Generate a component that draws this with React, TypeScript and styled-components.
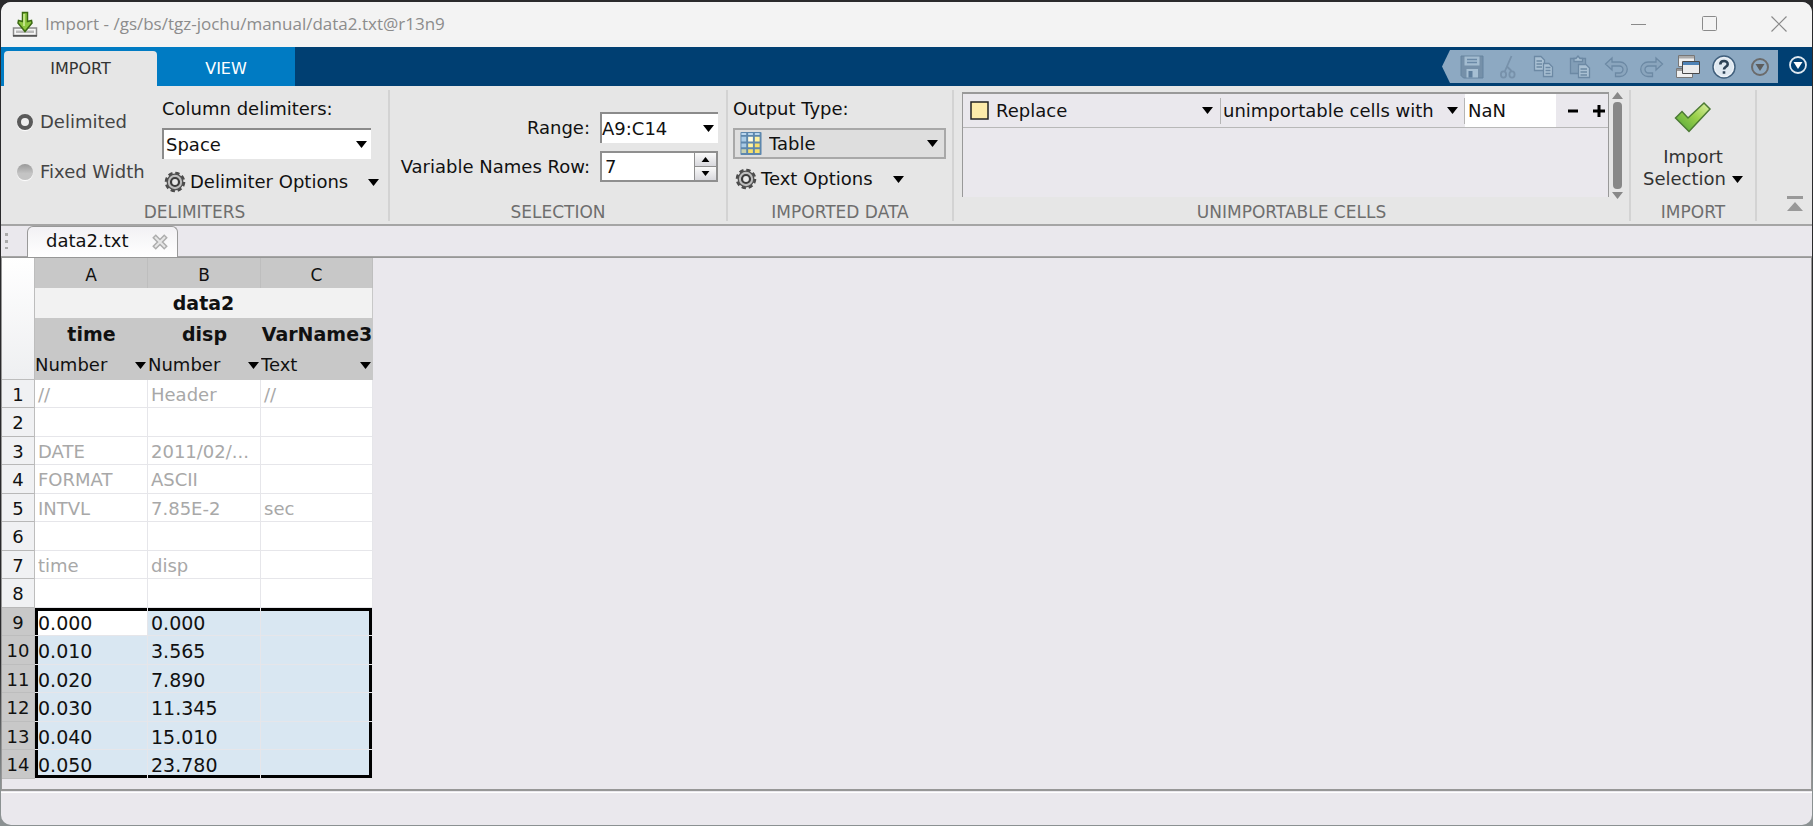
import React from "react";
import styled, { createGlobalStyle, css } from "styled-components";

const ui = `"DejaVu Sans", Verdana, sans-serif`;

const GlobalStyle = createGlobalStyle`
  *, *::before, *::after { box-sizing: border-box; }
  body { margin: 0; background: linear-gradient(#2a2a2c 0 80%, #8b9192 95%); font: 18px/22px ${ui}; color: #111; }
  button, input, select { font: inherit; color: inherit; margin: 0; padding: 0; border: 0; background: none; outline: 0; border-radius: 0; }
  svg { flex-shrink: 0; }
  #root { display: flex; flex-direction: column; min-height: 100vh; }
`;

const Window = styled.main`
  flex: 1;
  display: flex;
  flex-direction: column;
  margin: 2px 1px 1px;
  border-radius: 10px;
  overflow: hidden;
  background: #eae8ed;
`;

const TitleBar = styled.header`
  display: flex;
  align-items: center;
  height: 45px;
  padding: 0 0 2px 11px;
  background: #f3f3f3;
`;
const Title = styled.h1`
  flex: 1;
  margin: 0 0 0 7px;
  font: 400 17px/24px "Open Sans", "Noto Sans", sans-serif;
  color: #8c8c8c;
`;
const WindowButton = styled.button`
  display: grid;
  place-items: center;
  width: 71px;
  height: 43px;
  color: #8a8a8a;
  &:last-child { width: 67px; }
`;

const TabBar = styled.nav`
  display: flex;
  align-items: flex-end;
  height: 39px;
  background: #003f72;
`;
const Tabs = styled.div`
  display: flex;
  align-items: flex-end;
  height: 39px;
  padding-left: 3px;
  background: #007bc3;
`;
const Tab = styled.button<{ $active?: boolean }>`
  width: ${(p) => (p.$active ? 153 : 138)}px;
  height: 35px;
  font-size: 16px;
  color: ${(p) => (p.$active ? "#333" : "#fff")};
  background: ${(p) => (p.$active ? "#e6e6e6" : "transparent")};
  border-radius: 4px 4px 0 0;
`;
const QuickBar = styled.div`
  display: flex;
  height: 33px;
  margin: 3px 0 3px auto;
  padding-left: 12px;
  background: #8da9c2;
  clip-path: polygon(8px 0, 100% 0, 100% 100%, 8px 100%, 0 50%);
`;
const QuickButton = styled.button`
  display: grid;
  place-items: center;
  width: 36px;
  height: 33px;
`;
const MenuButton = styled(QuickButton)`
  width: 34px;
  height: 39px;
  padding: 0 0 4px 6px;
`;

const Ribbon = styled.section`
  display: flex;
  height: 140px;
  padding: 4px 0 3px;
  background: #e6e6e6;
  border-bottom: 2px solid #a5a5a5;
`;
const Section = styled.section<{ $width?: number }>`
  display: flex;
  flex-direction: column;
  ${(p) => (p.$width ? css`width: ${p.$width}px;` : css`flex: 1;`)}
  min-width: 0;
  border-right: 2px solid #d3d3d3;
`;
const SectionBody = styled.div<{ $gap?: number; $pad?: string }>`
  flex: 1;
  min-height: 0;
  display: flex;
  gap: ${(p) => p.$gap ?? 0}px;
  padding: ${(p) => p.$pad ?? "0"};
`;
const Caption = styled.h2`
  margin: 0;
  font-size: 17px;
  line-height: 18px;
  font-weight: 400;
  text-align: center;
  color: #6e6e6e;
`;
const Stack = styled.div<{ $gap: number; $width?: number; $top?: number }>`
  display: flex;
  flex-direction: column;
  gap: ${(p) => p.$gap}px;
  padding-top: ${(p) => p.$top ?? 0}px;
  ${(p) => p.$width && css`width: ${p.$width}px;`}
`;

const RadioLabel = styled.label`
  display: flex;
  align-items: center;
  gap: 7px;
  height: 22px;
  white-space: nowrap;
  color: #444;
`;
const Radio = styled.input`
  appearance: none;
  flex-shrink: 0;
  width: 16px;
  height: 16px;
  border-radius: 50%;
  background: linear-gradient(#999, #c4c4c4 60%);
  box-shadow: 0 1px 1px #fff;
  &:checked { background: #f0f0f0; border: 4px solid #5a5a5a; }
`;

const PickerWrap = styled.span<{ $look?: "sunken" | "raised" | "flat"; $h: number; $left: number; $right: number; $width?: number; $grow?: boolean }>`
  display: grid;
  align-items: center;
  height: ${(p) => p.$h}px;
  ${(p) => p.$width && css`width: ${p.$width}px;`}
  ${(p) => p.$grow && css`flex: 1;`}
  ${(p) => p.$look === "sunken" && css`background: #fff; border-top: 2px solid #8b8b8b; border-left: 2px solid #8b8b8b;`}
  ${(p) => p.$look === "raised" && css`background: #dedede; border: 2px solid #a8a8a8;`}
  & > * { grid-area: 1 / 1; }
  & > select, & > input { width: 100%; height: 100%; min-width: 0; appearance: none; padding-left: ${(p) => p.$left}px; }
  & > svg { pointer-events: none; margin-left: 5px; }
  & > svg:last-child { justify-self: end; margin: 0 ${(p) => p.$right}px 0 0; }
`;
const OptionsButton = styled.button<{ $h: number }>`
  display: flex;
  align-items: center;
  gap: 4px;
  height: ${(p) => p.$h}px;
  padding-left: 2px;
  white-space: nowrap;
  & > svg:last-child { margin-left: 16px; }
`;

const FieldGrid = styled.div`
  flex: 1;
  display: grid;
  grid-template-columns: 1fr 118px;
  grid-auto-rows: 31px;
  gap: 8px 10px;
  align-items: center;
  text-align: right;
  white-space: nowrap;
`;
const Spinner = styled.span`
  display: flex;
  height: 31px;
  border: 2px solid #8f8f8f;
  background: #fff;
  & > input { flex: 1; min-width: 0; padding-left: 3px; appearance: textfield; }
  & > input::-webkit-inner-spin-button { appearance: none; }
`;
const SpinButtons = styled.span`
  display: flex;
  flex-direction: column;
  width: 22px;
  border-left: 1px solid #8f8f8f;
`;
const SpinButton = styled.button`
  flex: 1;
  display: grid;
  place-items: center;
  background: linear-gradient(#fafafa, #d8d8dd);
  & + & { border-top: 1px solid #8f8f8f; }
`;

const RulePanel = styled.div`
  flex: 1;
  height: 105px;
  border: 1px solid #999;
  border-width: 2px 1px 0;
  background: #eae8ed;
`;
const Rule = styled.div`
  display: flex;
  align-items: center;
  height: 34px;
  border-bottom: 1px solid #b8b8b8;
`;
const Divider = styled.span`
  width: 1px;
  height: 26px;
  background: #b5b5b5;
`;
const ReplaceValue = styled.input`
  width: 91px;
  height: 33px;
  padding-left: 3px;
  background: #fff;
`;
const RuleButton = styled.button`
  display: grid;
  place-items: center;
  width: 18px;
  height: 26px;
  margin-left: 8px;
`;
const ScrollTrack = styled.div`
  display: flex;
  flex-direction: column;
  align-items: center;
  gap: 3px;
  width: 9px;
  height: 107px;
`;
const ScrollThumb = styled.div`
  flex: 1;
  width: 9px;
  border-radius: 4px;
  background: #888;
`;
const ImportButton = styled.button`
  flex: 1;
  display: flex;
  flex-direction: column;
  align-items: center;
  padding-top: 11px;
  color: #333;
  & > svg { margin-bottom: 12px; }
`;
const ButtonLine = styled.span`
  display: flex;
  align-items: center;
  gap: 6px;
`;
const RibbonEnd = styled.div`
  display: flex;
  align-items: flex-end;
  justify-content: flex-end;
  width: 55px;
  padding: 0 9px 4px 0;
`;

const DocBar = styled.div`
  display: flex;
  align-items: flex-end;
  height: 31px;
  border-bottom: 1px solid #a5a5a5;
`;
const Grip = styled.span`
  align-self: center;
  width: 3px;
  height: 16px;
  margin: 0 19px 0 4px;
  background: repeating-linear-gradient(#aaa 0 3px, transparent 3px 7px);
`;
const DocTab = styled.div`
  display: flex;
  align-items: center;
  justify-content: space-between;
  width: 151px;
  height: 31px;
  margin-bottom: -1px;
  padding: 0 8px 2px 18px;
  border: 1px solid #999;
  border-bottom: 0;
  border-radius: 6px 6px 0 0;
  background: linear-gradient(#f2f1f4, #fff);
`;
const DocClose = styled.button`
  display: grid;
  place-items: center;
  padding-top: 2px;
`;

const Sheet = styled.section`
  flex: 1;
  margin-bottom: 1px;
  border: 1px solid #979797;
  border-bottom-width: 2px;
`;
const StatusBar = styled.footer`
  height: 33px;
  border-top: 1px solid #fff;
`;

const Grid = styled.table`
  width: 371px;
  table-layout: fixed;
  border-collapse: separate;
  border-spacing: 0;
  th, td { padding: 0; overflow: hidden; white-space: nowrap; text-overflow: ellipsis; }
`;
const Corner = styled.td`
  background: linear-gradient(#fff, #eeeff1);
  border-right: 1px solid #bdbdbd;
  border-bottom: 1px solid #bdbdbd;
`;
const ColLetter = styled.th`
  && { padding-top: 3px; }
  height: 30px;
  background: #c8c8c8;
  border-right: 1px solid #bebebe;
  font-weight: 400;
  font-size: 17px;
`;
const TableName = styled.th`
  height: 30px;
  background: #f2f2f2;
  border-right: 1px solid #c8c8c8;
  font-size: 19px;
`;
const VarName = styled.th`
  height: 32px;
  background: #c8c8c8;
  font-size: 19px;
`;
const TypeCell = styled.td`
  height: 30px;
  background: #c8c8c8;
`;
const Row = styled.tr`
  height: 28px;
  &:nth-child(even) { height: 29px; }
`;
const RowNumber = styled.th<{ $on: boolean }>`
  && { padding-top: 2px; }
  background: ${(p) => (p.$on ? "#c8c8c8" : "#f0f1f3")};
  border-right: 1px solid #bdbdbd;
  border-bottom: 1px solid ${(p) => (p.$on ? "#bdbdbd" : "#b8b8b8")};
  font-weight: 400;
  text-align: center;
`;
const Cell = styled.td<{ $on: boolean; $anchor: boolean; $edge: string }>`
  && { padding: 2px 0 0 3px; }
  border-right: 1px solid #e6e6ea;
  border-bottom: 1px solid #e6e6ea;
  background: ${(p) => (p.$on && !p.$anchor ? "#d9e7f2" : "#fff")};
  color: ${(p) => (p.$on ? "#111" : "#a8a8a8")};
  font-size: ${(p) => (p.$on ? 19 : 18)}px;
  box-shadow: ${(p) => p.$edge};
`;

const Caret = ({ up, size = 11, color = "#000" }: { up?: boolean; size?: number; color?: string }) => (
  <svg width={size} height={size - 4} viewBox="0 0 11 7" aria-hidden="true">
    <path d={up ? "M0 7H11L5.500 0Z" : "M0 0H11L5.500 7Z"} fill={color} />
  </svg>
);

const Gear = () => (
  <svg width="22" height="22" viewBox="0 0 22 22" aria-hidden="true">
    <circle cx="11" cy="11" r="8.800" fill="none" stroke="#4c4c4c" strokeWidth="3" strokeDasharray="4.200 2.711" />
    <circle cx="11" cy="11" r="7.800" fill="#bdbdbd" stroke="#505050" strokeWidth="1.300" />
    <circle cx="11" cy="11" r="4" fill="#e8e8e8" stroke="#3c3c3c" strokeWidth="2.200" />
  </svg>
);

const TableIcon = () => (
  <svg width="22" height="23" viewBox="0 0 22 24" aria-hidden="true">
    <rect width="22" height="24" rx="1" fill="#5d87ad" />
    <path d="M1 1H6V3H1ZM8 1H13V3H8ZM15 1H20V3H15Z" fill="#b9d6ee" />
    <path d="M1 5H6V10H1ZM1 12H6V16H1Z" fill="#a9cbe6" />
    <path d="M1 18H6V22H1Z" fill="#c9d2b0" />
    <path d="M8 5H13V10H8Z" fill="#fffbe0" />
    <path d="M15 5H20V10H15ZM8 12H13V16H8Z" fill="#fff2a0" />
    <path d="M15 12H20V16H15ZM8 18H13V22H8ZM15 18H20V22H15Z" fill="#f6df6a" />
  </svg>
);

const AppIcon = () => (
  <svg width="26" height="26" viewBox="0 0 26 26" aria-hidden="true">
    <path d="M1.500 17H24.500V24.500H1.500Z" fill="#f6f6f6" stroke="#8a8a8a" strokeWidth="1.500" />
    <path d="M4 19.500H22V22H4Z" fill="#b9b9b9" />
    <path d="M1 24.800H25" stroke="#555" strokeWidth="1.800" />
    <path d="M10.500 1.500H15.500V10.500L19.500 9.500L20 12L13 20.500L6 12L6.500 9.500L10.500 10.500Z" fill="#8cc63f" stroke="#3b6a12" strokeWidth="1.500" />
    <path d="M12 3V15" stroke="#d4f0a0" strokeWidth="1.500" />
  </svg>
);

const CheckIcon = () => (
  <svg width="38" height="33" viewBox="0 0 38 33" aria-hidden="true">
    <defs>
      <linearGradient id="check" x1="0" y1="1" x2="1" y2="0">
        <stop offset="0" stopColor="#4da33a" />
        <stop offset=".55" stopColor="#9ad04a" />
        <stop offset="1" stopColor="#dff0a8" />
      </linearGradient>
    </defs>
    <path d="M1.500 17L8 10.500L14 17L30 2L36 8L15 30.500Z" fill="url(#check)" stroke="#4c7a34" strokeWidth="1.500" />
  </svg>
);

const quick: Record<string, React.ReactNode> = {
  Save: (
    <g>
      <path d="M1 1H23V23H3.500L1 20.500Z" fill="#7590a9" stroke="#66849f" />
      <path d="M4.500 1.500H19.500V10.500H4.500Z" fill="#a3bcd0" />
      <path d="M7 4.500H17M7 7.500H17" stroke="#6a89a6" strokeWidth="1.300" />
      <path d="M6.500 14H18V22.500H6.500Z" fill="#a6bfd3" />
      <path d="M8.500 16H12.500V22.500H8.500Z" fill="#5f7f9d" />
    </g>
  ),
  Cut: (
    <g fill="none" stroke="#7791aa" strokeWidth="1.800">
      <path d="M15.500 1L9 16M10.500 11L15.500 16" />
      <ellipse cx="7.500" cy="19.500" rx="2.600" ry="3.200" />
      <ellipse cx="16" cy="19.500" rx="2.600" ry="3.200" />
    </g>
  ),
  Copy: (
    <g fill="#a9c0d3" stroke="#6c89a4" strokeWidth="1.300">
      <path d="M2.500 1.500H9L12.500 5V15.500H2.500Z" />
      <path d="M4.500 6H10M4.500 9H10M4.500 12H10" />
      <path d="M11.500 8.500H17L20.500 12V21.500H11.500Z" />
      <path d="M13.500 12.500H18.500M13.500 15.500H18.500M13.500 18.500H18.500" />
    </g>
  ),
  Paste: (
    <g stroke="#6c89a4" strokeWidth="1.300">
      <path d="M2.500 3.500H17.500V18.500H2.500Z" fill="#829eb7" />
      <path d="M6 3.500H8L10 1L12 3.500H14.500V6.500H6Z" fill="#a9c0d3" />
      <path d="M10.500 9.500H18L21.500 13V22.500H10.500Z" fill="#a9c0d3" />
      <path d="M12.500 14H19M12.500 17H19M12.500 20H19" />
    </g>
  ),
  Undo: <path d="M8 3L1.500 9L8 15V11H15.500A3.500 3.500 0 0 1 15.500 18H11.500V21.500H16A7 7 0 0 0 16 7H8Z" fill="#8aa5bd" stroke="#6c89a4" strokeWidth="1.300" />,
  Redo: <path d="M16 3L22.500 9L16 15V11H8.500A3.500 3.500 0 0 0 8.500 18H12.500V21.500H8A7 7 0 0 1 8 7H16Z" fill="#8aa5bd" stroke="#6c89a4" strokeWidth="1.300" />,
  Windows: (
    <g stroke="#777">
      <path d="M2.500 .500H18.500V11.500H2.500Z" fill="#f0f0f0" />
      <path d="M3 1H18V3.500H3Z" fill="#aaa" stroke="none" />
      <path d="M.500 13.500H16.500V22.500H.500Z" fill="#f0f0f0" />
      <path d="M1 14H16V16H1Z" fill="#999" stroke="none" />
      <path d="M6.500 6.500H23.500V18.500H6.500Z" fill="#ececec" stroke="#4a4a4a" />
      <path d="M7 7H23V10H7Z" fill="#4f83b6" stroke="none" />
    </g>
  ),
  Help: (
    <g fill="none">
      <circle cx="12" cy="12" r="11" fill="#eef3f8" stroke="#41607d" strokeWidth="1.500" />
      <circle cx="12" cy="12" r="9" fill="#dfe8f0" />
      <path d="M8.300 9.500C8.300 4.800 15.700 4.800 15.700 9.200C15.700 11.800 12 11.800 12 14.500M12 16.300V18.800" stroke="#2d4255" strokeWidth="2.600" />
    </g>
  ),
  More: (
    <g>
      <circle cx="12" cy="12" r="8" fill="none" stroke="#6b6b6b" strokeWidth="2" />
      <path d="M7.500 9H16.500L12 16Z" fill="#5c5c5c" />
    </g>
  ),
};

const rows: [string, string, string][] = [
  ["//", "Header", "//"],
  ["", "", ""],
  ["DATE", "2011/02/...", ""],
  ["FORMAT", "ASCII", ""],
  ["INTVL", "7.85E-2", "sec"],
  ["", "", ""],
  ["time", "disp", ""],
  ["", "", ""],
  ["0.000", "0.000", ""],
  ["0.010", "3.565", ""],
  ["0.020", "7.890", ""],
  ["0.030", "11.345", ""],
  ["0.040", "15.010", ""],
  ["0.050", "23.780", ""],
];
const firstSelected = 8;

function selectionEdge(row: number, col: number) {
  if (row < firstSelected) return "none";
  const edges: string[] = [];
  if (row === firstSelected) edges.push("inset 0 3px #000");
  if (row === rows.length - 1) edges.push("inset 0 -3px #000");
  if (col === 0) edges.push("inset 3px 0 #000");
  if (col === 2) edges.push("inset -3px 0 #000");
  return edges.join(", ") || "none";
}

export default function App() {
  return (
    <>
      <GlobalStyle />
      <Window>
        <TitleBar>
          <AppIcon />
          <Title>Import - /gs/bs/tgz-jochu/manual/data2.txt@r13n9</Title>
          <WindowButton aria-label="Minimize">
            <svg width="16" height="16"><path d="M0 8.500H15" stroke="currentColor" /></svg>
          </WindowButton>
          <WindowButton aria-label="Maximize">
            <svg width="16" height="16"><rect x=".5" y=".5" width="14" height="14" rx="1" fill="none" stroke="currentColor" /></svg>
          </WindowButton>
          <WindowButton aria-label="Close">
            <svg width="16" height="16"><path d="M.500 .500L15.500 15.500M15.500 .500L.500 15.500" stroke="currentColor" strokeWidth="1.200" /></svg>
          </WindowButton>
        </TitleBar>

        <TabBar>
          <Tabs>
            <Tab $active>IMPORT</Tab>
            <Tab>VIEW</Tab>
          </Tabs>
          <QuickBar>
            {Object.entries(quick).map(([name, art]) => (
              <QuickButton key={name} aria-label={name}>
                <svg width="24" height="24" viewBox="0 0 24 24">{art}</svg>
              </QuickButton>
            ))}
          </QuickBar>
          <MenuButton aria-label="Toolstrip menu">
            <svg width="20" height="20" viewBox="0 0 20 20">
              <circle cx="10" cy="10" r="8" fill="none" stroke="#dfe8f0" strokeWidth="1.800" />
              <path d="M5.500 7H14.500L10 14Z" fill="#fff" />
            </svg>
          </MenuButton>
        </TabBar>

        <Ribbon>
          <Section $width={389}>
            <SectionBody $gap={16} $pad="8px 8px 0 16px">
              <Stack $gap={28} $width={129} $top={13}>
                <RadioLabel>
                  <Radio type="radio" name="mode" defaultChecked />Delimited
                </RadioLabel>
                <RadioLabel>
                  <Radio type="radio" name="mode" />Fixed Width
                </RadioLabel>
              </Stack>
              <Stack $gap={8} $width={209}>
                <label htmlFor="delim">Column delimiters:</label>
                <PickerWrap $look="sunken" $h={31} $left={2} $right={4}>
                  <select id="delim"><option>Space</option></select>
                  <Caret />
                </PickerWrap>
                <OptionsButton $h={30}><Gear />Delimiter Options<Caret /></OptionsButton>
              </Stack>
            </SectionBody>
            <Caption>DELIMITERS</Caption>
          </Section>

          <Section $width={338}>
            <SectionBody $pad="22px 8px 0 0">
              <FieldGrid>
                <label htmlFor="range">Range:</label>
                <PickerWrap $look="sunken" $h={31} $left={0} $right={4}>
                  <input id="range" defaultValue="A9:C14" />
                  <Caret />
                </PickerWrap>
                <label htmlFor="namesRow">Variable Names Row:</label>
                <Spinner>
                  <input id="namesRow" type="number" defaultValue={7} />
                  <SpinButtons>
                    <SpinButton aria-label="Increase"><Caret up size={9} /></SpinButton>
                    <SpinButton aria-label="Decrease"><Caret size={9} /></SpinButton>
                  </SpinButtons>
                </Spinner>
              </FieldGrid>
            </SectionBody>
            <Caption>SELECTION</Caption>
          </Section>

          <Section $width={226}>
            <SectionBody $pad="8px 6px 0 5px">
              <Stack $gap={8} $width={213}>
                <label htmlFor="outType">Output Type:</label>
                <PickerWrap $look="raised" $h={31} $left={34} $right={6}>
                  <select id="outType"><option>Table</option></select>
                  <TableIcon />
                  <Caret />
                </PickerWrap>
                <OptionsButton $h={24}><Gear />Text Options<Caret /></OptionsButton>
              </Stack>
            </SectionBody>
            <Caption>IMPORTED DATA</Caption>
          </Section>

          <Section>
            <SectionBody $gap={4} $pad="2px 7px 0 8px">
              <RulePanel>
                <Rule>
                  <PickerWrap $look="flat" $h={32} $left={33} $right={7} $grow>
                    <select aria-label="Rule action"><option>Replace</option></select>
                    <svg width="22" height="19" aria-hidden="true"><rect x="3" y="1" width="17" height="17" fill="#fdebaa" stroke="#222" strokeWidth="1.500" /></svg>
                    <Caret />
                  </PickerWrap>
                  <Divider />
                  <PickerWrap $look="flat" $h={32} $left={2} $right={6} $width={243}>
                    <select aria-label="Rule target"><option>unimportable cells with</option></select>
                    <Caret />
                  </PickerWrap>
                  <Divider />
                  <ReplaceValue aria-label="Replacement value" defaultValue="NaN" />
                  <RuleButton aria-label="Remove rule">
                    <svg width="12" height="12"><path d="M1 6H11" stroke="#000" strokeWidth="3" /></svg>
                  </RuleButton>
                  <RuleButton aria-label="Add rule">
                    <svg width="12" height="12"><path d="M0 6H12M6 0V12" stroke="#000" strokeWidth="3" /></svg>
                  </RuleButton>
                </Rule>
              </RulePanel>
              <ScrollTrack>
                <Caret up color="#888" />
                <ScrollThumb />
                <Caret color="#888" />
              </ScrollTrack>
            </SectionBody>
            <Caption>UNIMPORTABLE CELLS</Caption>
          </Section>

          <Section $width={126}>
            <ImportButton>
              <CheckIcon />
              <ButtonLine>Import</ButtonLine>
              <ButtonLine>Selection<Caret /></ButtonLine>
            </ImportButton>
            <Caption>IMPORT</Caption>
          </Section>
          <RibbonEnd>
            <button aria-label="Minimize toolstrip">
              <svg width="16" height="16"><path d="M0 0H16V3H0ZM8 6L16 15H0Z" fill="#999" /></svg>
            </button>
          </RibbonEnd>
        </Ribbon>

        <DocBar>
          <Grip />
          <DocTab>
            data2.txt
            <DocClose aria-label="Close document">
              <svg width="18" height="18"><path d="M3 3L15 15M15 3L3 15" stroke="#adadad" strokeWidth="5" /><path d="M4 4L14 14M14 4L4 14" stroke="#e6e6e6" strokeWidth="2" /></svg>
            </DocClose>
          </DocTab>
        </DocBar>

        <Sheet>
          <Grid>
            <colgroup>
              <col width="33" /><col width="113" /><col width="113" /><col width="112" />
            </colgroup>
            <thead>
              <tr>
                <Corner rowSpan={4} />
                {["A", "B", "C"].map((c) => <ColLetter key={c}>{c}</ColLetter>)}
              </tr>
              <tr><TableName colSpan={3}>data2</TableName></tr>
              <tr>{["time", "disp", "VarName3"].map((n) => <VarName key={n}>{n}</VarName>)}</tr>
              <tr>
                {["Number", "Number", "Text"].map((t, i) => (
                  <TypeCell key={i}>
                    <PickerWrap $look="flat" $h={28} $left={0} $right={2}>
                      <select aria-label={`Type of column ${i + 1}`}><option>{t}</option></select>
                      <Caret />
                    </PickerWrap>
                  </TypeCell>
                ))}
              </tr>
            </thead>
            <tbody>
              {rows.map((row, r) => (
                <Row key={r}>
                  <RowNumber $on={r >= firstSelected}>{r + 1}</RowNumber>
                  {row.map((text, c) => (
                    <Cell key={c} $on={r >= firstSelected} $anchor={r === firstSelected && c === 0} $edge={selectionEdge(r, c)}>
                      {text}
                    </Cell>
                  ))}
                </Row>
              ))}
            </tbody>
          </Grid>
        </Sheet>
        <StatusBar />
      </Window>
    </>
  );
}
